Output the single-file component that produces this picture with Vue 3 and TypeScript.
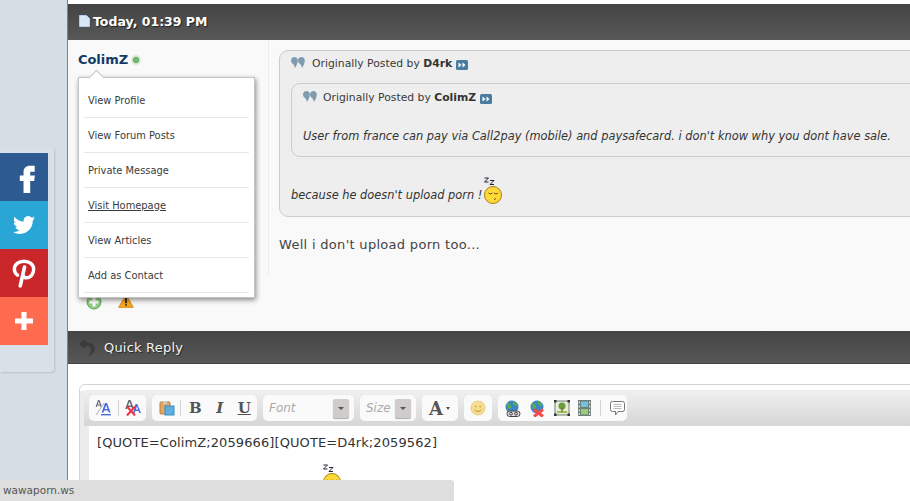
<script setup lang="ts">
const menu: string[] = ['View Profile', 'View Forum Posts', 'Private Message', 'Visit Homepage', 'View Articles', 'Add as Contact']
</script>

<template>
  <div class="page">
    <aside class="social">
      <a class="soc fb"><svg width="32" height="32" viewBox="0 0 24 24"><path fill="#fff" d="M14.6 8h3.2V3.6h-3.4c-3.4 0-5 2-5 4.8v2.4H6.6v4.2h2.8V24h5v-9h3l.5-4.2h-3.5V9c0-.6.3-1 .7-1z"/></svg></a>
      <a class="soc tw"><svg width="22" height="22" viewBox="0 0 24 24"><path fill="#fff" d="M23.95 4.57a10 10 0 0 1-2.82.77 4.96 4.96 0 0 0 2.16-2.72c-.95.55-2 .96-3.12 1.19a4.92 4.92 0 0 0-8.38 4.48C7.69 8.1 4.07 6.13 1.64 3.16a4.82 4.82 0 0 0-.66 2.47c0 1.71.87 3.21 2.19 4.1a4.9 4.9 0 0 1-2.23-.61v.06c0 2.38 1.69 4.37 3.95 4.82a5 5 0 0 1-2.21.08 4.94 4.94 0 0 0 4.6 3.42A9.87 9.87 0 0 1 0 19.54a14 14 0 0 0 7.56 2.21c9.05 0 14-7.5 14-13.98 0-.21 0-.42-.02-.63A9.94 9.94 0 0 0 24 4.59z"/></svg></a>
      <a class="soc pi"><svg width="26" height="30" viewBox="0 0 24 28"><g fill="none" stroke="#fff" stroke-linecap="round"><path stroke-width="3.200" d="M6 16C4 14.600 3 12.500 3 10.500 3 6 7 3 12 3s9 3 9 7.500c0 4.500-3 8-6.500 8-1.700 0-3-.9-3.500-2"/><path stroke-width="3.400" d="M12.500 8.500L8.500 26"/></g></svg></a>
      <a class="soc more"><svg width="18" height="18" viewBox="0 0 18 18"><path fill="#fff" d="M6.500 0h5v6.500H18v5h-6.500V18h-5v-6.500H0v-5h6.500z"/></svg></a>
    </aside>

    <main class="main">
      <div class="inner">
        <header class="bar post-bar">
          <svg class="doc" width="11" height="12" viewBox="0 0 11 12"><path fill="#d9e6f7" stroke="#b6cbe6" d="M.5.500h7l3 3v8H.5z"/></svg>
          <span class="date">Today, 01:39 PM</span>
        </header>

        <section class="post">
          <div class="user">
            <div class="name-row">
              <a class="name">ColimZ</a>
              <svg width="10" height="10" viewBox="0 0 10 10"><circle cx="5" cy="5" r="4.800" fill="#d2e8d0"/><circle cx="5" cy="5" r="2.600" fill="#79bb6e" stroke="#4f9a4f" stroke-width=".8"/></svg>
            </div>
            <div class="user-icons">
              <svg width="16" height="16" viewBox="0 0 16 16"><circle cx="8" cy="8" r="7" fill="#93cc84" stroke="#5fa35c"/><path fill="#fff" d="M6.500 3.500h3v3h3v3h-3v3h-3v-3h-3v-3h3z"/></svg>
              <svg width="16" height="14" viewBox="0 0 16 14"><path fill="#f5a623" stroke="#d98a12" d="M8 .8L15.300 13.300H.7z"/><path fill="#111" d="M7.200 4h1.600v5.200H7.200zM7.200 10.200h1.600v1.600H7.200z"/></svg>
            </div>
            <nav class="menu">
              <a v-for="item in menu" :key="item" class="menu-item" :class="{ hover: item === 'Visit Homepage' }"><span>{{ item }}</span></a>
            </nav>
          </div>

          <div class="content">
            <div class="quote outer">
              <div class="quote-head">
                <svg class="qm" width="14" height="11" viewBox="0 0 14 11"><g fill="#7f9bb0"><path d="M3.500 0C5.500 0 6.800 1.500 6.800 3.500c0 3-1.700 5.500-2.800 7.500C3.600 9 3 8 2 7 .8 6.300 0 5 0 3.500 0 1.500 1.500 0 3.500 0z"/><path d="M10.500 0c2 0 3.300 1.500 3.300 3.500 0 3-1.700 5.500-2.800 7.500-.4-2-1-3-2-4C7.800 6.300 7 5 7 3.500 7 1.500 8.500 0 10.500 0z"/></g></svg>
                <span>Originally Posted by <b>D4rk</b></span>
                <svg class="go" width="12" height="10" viewBox="0 0 12 10"><rect width="12" height="10" rx="1.500" fill="#4a7ba0"/><path fill="#fff" d="M2.500 2.500l3 2.500-3 2.500zM6.500 2.500l3 2.500-3 2.500z"/></svg>
              </div>
              <div class="quote inner-quote">
                <div class="quote-head">
                  <svg class="qm" width="14" height="11" viewBox="0 0 14 11"><g fill="#7f9bb0"><path d="M3.500 0C5.500 0 6.800 1.500 6.800 3.500c0 3-1.700 5.500-2.800 7.500C3.600 9 3 8 2 7 .8 6.300 0 5 0 3.500 0 1.500 1.500 0 3.500 0z"/><path d="M10.500 0c2 0 3.300 1.500 3.300 3.500 0 3-1.700 5.500-2.800 7.500-.4-2-1-3-2-4C7.800 6.300 7 5 7 3.500 7 1.500 8.500 0 10.500 0z"/></g></svg>
                  <span>Originally Posted by <b>ColimZ</b></span>
                  <svg class="go" width="12" height="10" viewBox="0 0 12 10"><rect width="12" height="10" rx="1.500" fill="#4a7ba0"/><path fill="#fff" d="M2.500 2.500l3 2.500-3 2.500zM6.500 2.500l3 2.500-3 2.500z"/></svg>
                </div>
                <p class="quoted">User from france can pay via Call2pay (mobile) and paysafecard. i don't know why you dont have sale.</p>
              </div>
              <p class="quoted reply">because he doesn't upload porn !
                <svg class="sleep" width="20" height="28" viewBox="0 0 20 28"><g fill="none" stroke="#223" stroke-width="1"><path d="M1.500 1h4L1.500 5h4"/><path d="M7 3.500h4l-4 4h4"/></g><circle cx="10" cy="18" r="8.500" fill="#ffd83a" stroke="#a97f10"/><path d="M5.500 16l2 1 2-1M11 16l2 1 2-1M11 22.500l2-1" fill="none" stroke="#5b4508" stroke-width=".9"/></svg>
              </p>
            </div>
            <p class="message">Well i don't upload porn too...</p>
          </div>
        </section>

        <header class="bar reply-bar">
          <svg width="16" height="17" viewBox="0 0 16 17"><path fill="#3c3c3c" d="M6 0L0 5l6 5V7c3 0 6 1 6 4 0 2-1 4-3 6 4-1 7-4 7-7.500C16 5 11 3 6 3z"/></svg>
          <span class="reply-title">Quick Reply</span>
        </header>

        <section class="editor">
          <div class="editor-frame">
            <div class="toolbar">
              <div class="tgroup g1">
                <span class="btn">
                  <svg width="16" height="16" viewBox="0 0 16 16"><path fill="#667" d="M3 0h1.400L7 7H5.600l-.5-1.500H2.400L1.900 7H.6zM2.700 4.500h2.100L3.700 1.500z"/><path d="M1 15L9 3" stroke="#aab" /><path fill="#4a6ee0" d="M10 3h2l3.600 9.500h-1.900l-.7-2H9.200l-.7 2H6.600zM9.800 9h2.700L11.100 5z"/><rect x="6" y="14" width="10" height="1.400" fill="#4a6ee0"/></svg>
                </span>
                <i class="sep"></i>
                <span class="btn">
                  <svg width="16" height="16" viewBox="0 0 16 16"><path fill="#667" d="M3.500 0h2L9 9H7.200l-.7-2H2.600l-.7 2H.2zM3 5.500h3L4.500 1.800z"/><path fill="#4a6ee0" d="M10.500 4h1.800L16 13h-1.700l-.7-2h-3.300l-.7 2H8zM10.800 9.600h2.300L12 6.300z"/><path d="M2 6.500l8 9M10 6.500l-8 9" stroke="#ee3344" stroke-width="2"/></svg>
                </span>
              </div>
              <div class="tgroup g2">
                <span class="btn">
                  <svg width="16" height="16" viewBox="0 0 16 16"><rect x="1" y="2" width="10" height="12" rx="1" fill="#e0a868" stroke="#b87c3c"/><rect x="4" y="1" width="4" height="3" fill="#ccc"/><rect x="6" y="6" width="9" height="9" fill="#5cb0e0" stroke="#3d8cbc"/></svg>
                </span>
                <i class="sep"></i>
                <b class="fmt bold">B</b>
                <b class="fmt italic">I</b>
                <b class="fmt under">U</b>
              </div>
              <div class="tgroup select font-sel">
                <em>Font</em><span class="drop"><i></i></span>
              </div>
              <div class="tgroup select size-sel">
                <em>Size</em><span class="drop"><i></i></span>
              </div>
              <div class="tgroup color">
                <b>A</b><i class="caret"></i>
              </div>
              <div class="tgroup smile">
                <svg width="16" height="16" viewBox="0 0 16 16"><circle cx="8" cy="8" r="7" fill="#f8dd8e" stroke="#e6cd82"/><circle cx="5.800" cy="6.500" r=".8" fill="#b39540"/><circle cx="10.200" cy="6.500" r=".8" fill="#b39540"/><path d="M4.500 9.500c1 2.500 6 2.500 7 0" fill="none" stroke="#b39540"/></svg>
              </div>
              <div class="tgroup links">
                <svg width="17" height="17" viewBox="0 0 17 17"><circle cx="8" cy="7" r="6.500" fill="#3d86c6"/><path d="M3 3c2 0 3 1 4 3s-1 3-3 3zM9 1c2 1 4 2 4 5-2 0-3-1-4-2z" fill="#55b04a"/><rect x="3" y="11" width="13" height="5.500" rx="2.700" fill="#ddd" stroke="#444"/><circle cx="7" cy="13.700" r="1.400" fill="none" stroke="#444"/><circle cx="12" cy="13.700" r="1.400" fill="none" stroke="#444"/></svg>
                <svg width="17" height="17" viewBox="0 0 17 17"><circle cx="8" cy="7" r="6.500" fill="#3d86c6"/><path d="M3 3c2 0 3 1 4 3s-1 3-3 3zM9 1c2 1 4 2 4 5-2 0-3-1-4-2z" fill="#55b04a"/><path d="M5 9.500l9 7M14 9.500l-9 7" stroke="#f04a4a" stroke-width="3"/></svg>
                <svg width="16" height="16" viewBox="0 0 16 16"><rect x="1" y="1" width="14" height="14" fill="#e4efd8" stroke="#777"/><rect x="3" y="11" width="10" height="2" fill="#9bc05a"/><circle cx="8" cy="6" r="3.500" fill="#6b9a3f"/><rect x="7.400" y="8" width="1.200" height="4" fill="#7a5a30"/><path fill="#333" d="M0 0h2.500v2.500H0zM13.500 0H16v2.500h-2.500zM0 13.500h2.500V16H0zM13.500 13.500H16V16h-2.500z"/></svg>
                <svg width="13" height="16" viewBox="0 0 13 16"><rect width="13" height="16" fill="#6e7f79"/><rect x="3" y="1.500" width="7" height="5.500" fill="#77c0dd"/><rect x="3" y="9" width="7" height="5.500" fill="#9ccb78"/><path fill="#dfe6e3" d="M.8 1.500h1.200v2H.8zM.8 5.500h1.200v2H.8zM.8 9.500h1.200v2H.8zM.8 13h1.200v2H.8zM11 1.500h1.200v2H11zM11 5.500h1.200v2H11zM11 9.500h1.200v2H11zM11 13h1.200v2H11z"/></svg>
                <i class="sep tall"></i>
                <svg width="15" height="15" viewBox="0 0 15 15"><path fill="#fff" stroke="#777" d="M2.500.500h10a2 2 0 0 1 2 2v6a2 2 0 0 1-2 2H8l-2.500 3.500v-3.500h-3a2 2 0 0 1-2-2v-6a2 2 0 0 1 2-2z"/><path stroke="#bbb" d="M3.500 3.500h8M3.500 5.500h8M3.500 7.500h8"/></svg>
              </div>
            </div>
            <div class="textarea">
              <p>[QUOTE=ColimZ;2059666][QUOTE=D4rk;2059562]</p>
              <svg class="sleep2" width="20" height="28" viewBox="0 0 20 28"><g fill="none" stroke="#223" stroke-width="1"><path d="M1.500 1h4L1.500 5h4"/><path d="M7 3.500h4l-4 4h4"/></g><circle cx="10" cy="18" r="8.500" fill="#ffd83a" stroke="#a97f10"/><path d="M5.500 16l2 1 2-1M11 16l2 1 2-1" fill="none" stroke="#5b4508" stroke-width=".9"/></svg>
            </div>
          </div>
        </section>
      </div>
    </main>

    <div class="status">wawaporn.ws</div>
  </div>
</template>

<style>
html, body { margin: 0; background: #d5dde5; }
</style>

<style scoped>
.page {
  position: relative;
  display: flex;
  height: 501px;
  overflow: hidden;
  background: #d5dde5;
  font-family: "DejaVu Sans", Verdana, sans-serif;
  color: #3a3a3a;
}
.social {
  position: absolute;
  left: 0;
  top: 147px;
  width: 48px;
  padding: 6px 6px 27px 0;
  background: #d9e0e8;
  box-shadow: 1px 1px 2px rgba(0, 0, 0, .12);
  border-radius: 0 3px 3px 0;
  z-index: 3;
}
.soc { display: flex; align-items: center; justify-content: center; width: 48px; height: 48px; }
.fb { background: #2d5a90; padding-left: 6px; box-sizing: border-box; }
.tw { background: #29a6d6; }
.pi { background: #c82628; }
.more { background: #ff6b4f; }

.main {
  margin-left: 67px;
  flex: 1;
  min-width: 0;
  overflow: hidden;
  background: #fff;
  border-left: 1px solid #7b8287;
}
.inner { width: 880px; padding-top: 4px; }
.bar { display: flex; align-items: center; background: linear-gradient(#444, #585858); box-sizing: border-box; }
.post-bar { height: 36px; padding-left: 11px; padding-bottom: 2px; }
.doc { margin-right: 3px; }
.date { color: #fff; font-weight: 700; font-size: 12.500px; text-shadow: 1px 1px 1px #222; }

.post { display: flex; height: 291px; background: #f9f9f9; }
.user { position: relative; width: 201px; height: 235px; box-sizing: border-box; border-right: 1px solid #ececec; padding: 11px 0 0 10px; flex: none; }
.name-row { display: flex; align-items: center; gap: 3px; height: 17px; }
.name { color: #123a66; font-weight: 700; font-size: 13px; letter-spacing: -.05px; }
.user-icons { display: flex; gap: 16px; margin-top: 226px; padding-left: 8px; }
.menu {
  position: absolute;
  left: 10px;
  top: 37px;
  width: 177px;
  height: 221px;
  padding: 5px 5px 0;
  box-sizing: border-box;
  background: #fff;
  border: 1px solid #c4c4c4;
  box-shadow: 1px 2px 5px rgba(0, 0, 0, .45);
  z-index: 2;
}
.menu::before {
  content: "";
  position: absolute;
  left: 12px;
  top: -6px;
  width: 10px;
  height: 10px;
  background: #fff;
  border-left: 1px solid #c4c4c4;
  border-top: 1px solid #c4c4c4;
  transform: rotate(45deg);
}
.menu-item {
  display: flex;
  align-items: center;
  height: 35px;
  box-sizing: border-box;
  padding-left: 4px;
  border-bottom: 1px solid #e8e8e8;
  font-size: 9.900px;
  color: #3b3b3b;
}
.hover span { text-decoration: underline; }

.content { flex: 1; min-width: 0; padding: 10px 0 0 10px; }
.quote { background: #eee; border: 1px solid #ccc; border-radius: 9px; box-sizing: border-box; }
.outer { height: 167px; padding: 3px 0 0 11px; }
.inner-quote { height: 74px; padding: 0 0 0 11px; margin-top: 10px; }
.quote-head { display: flex; align-items: center; font-size: 10.800px; height: 19px; }
.inner-quote .quote-head { margin-top: 4px; }
.quote-head b { color: #333; }
.qm { margin-right: 7px; margin-top: -3px; }
.inner-quote .qm { margin-right: 6px; }
.go { margin-left: 4px; margin-top: 2px; }
.quoted { margin: 0; font-size: 11.400px; font-style: italic; color: #333; }
.inner-quote .quoted { margin-top: 22px; }
.reply { margin-top: 20px; display: flex; align-items: flex-end; gap: 1px; margin-left: 0; height: 28px; line-height: 20px; }
.sleep { flex: none; margin-bottom: 0; }
.message { margin: 20px 0 0; font-size: 13px; letter-spacing: .3px; color: #444; }
.outer { position: relative; }

.reply-bar { height: 33px; padding-left: 11px; border-bottom: 1px solid #444; }
.reply-title { margin-left: 9px; color: #f2f2f2; font-weight: 500; font-size: 13px; letter-spacing: .2px; text-shadow: 1px 1px 1px #222; }

.editor { padding: 20px 0 0 11px; }
.editor-frame {
  border: 1px solid #d4d4d4;
  border-radius: 6px;
  padding: 5px 0 0 4px;
  background: linear-gradient(#fff 6px, #ececec 6px);
  height: 130px;
  box-sizing: border-box;
}
.toolbar {
  display: flex;
  gap: 6px;
  height: 36px;
  padding: 5px 0 0 5px;
  box-sizing: border-box;
  background: linear-gradient(#f0f0f0, #d6d6d6);
  align-items: flex-start;
}
.tgroup { display: flex; align-items: center; height: 26px; background: #fafafa; border-radius: 5px; box-sizing: border-box; flex: none; }
.g1 { width: 57px; padding-left: 6px; }
.g2 { width: 105px; padding-left: 7px; }
.btn { display: flex; }
.sep { display: block; width: 1px; height: 16px; background: #d4d4d4; margin: 0 6px 0 7px; flex: none; }
.g2 .sep { margin: 0 2px 0 5px; }
.fmt { font-family: "DejaVu Serif", serif; font-size: 15px; color: #555; width: 24.500px; text-align: center; }
.italic { font-style: italic; }
.under { text-decoration: underline; }
.select em { font-size: 12px; color: #aaa; }
.font-sel { width: 91px; padding-left: 6px; justify-content: space-between; }
.size-sel { width: 56px; padding-left: 6px; justify-content: space-between; }
.drop { display: flex; align-items: center; justify-content: center; width: 16px; height: 19px; margin-right: 5px; background: #d0cccc; border-radius: 2px; box-shadow: 0 1px 1px #aaa; }
.drop i { width: 0; height: 0; border: 3px solid transparent; border-top: 3px solid #555; border-bottom: 0; }
.color { width: 36px; padding-left: 7px; gap: 3px; }
.color b { font-family: "DejaVu Serif", serif; font-size: 18px; color: #555; }
.caret { width: 0; height: 0; border: 2.500px solid transparent; border-top: 3px solid #555; border-bottom: 0; }
.smile { width: 28px; justify-content: center; }
.links { width: 129px; padding-left: 6px; gap: 8px; }
.sep.tall { margin: 0 1px; }
.textarea { position: relative; height: 100px; margin-left: 5px; background: #fff; }
.textarea p { margin: 0; padding: 9px 0 0 8px; font-size: 13px; letter-spacing: .1px; color: #333; }
.sleep2 { position: absolute; left: 233px; top: 38px; }

.status {
  position: absolute;
  left: 0;
  bottom: 0;
  width: 454px;
  height: 21px;
  line-height: 21px;
  padding-left: 3px;
  box-sizing: border-box;
  background: #dedede;
  border-radius: 0 3px 0 0;
  font-size: 10.500px;
  color: #555;
  z-index: 4;
}
</style>
